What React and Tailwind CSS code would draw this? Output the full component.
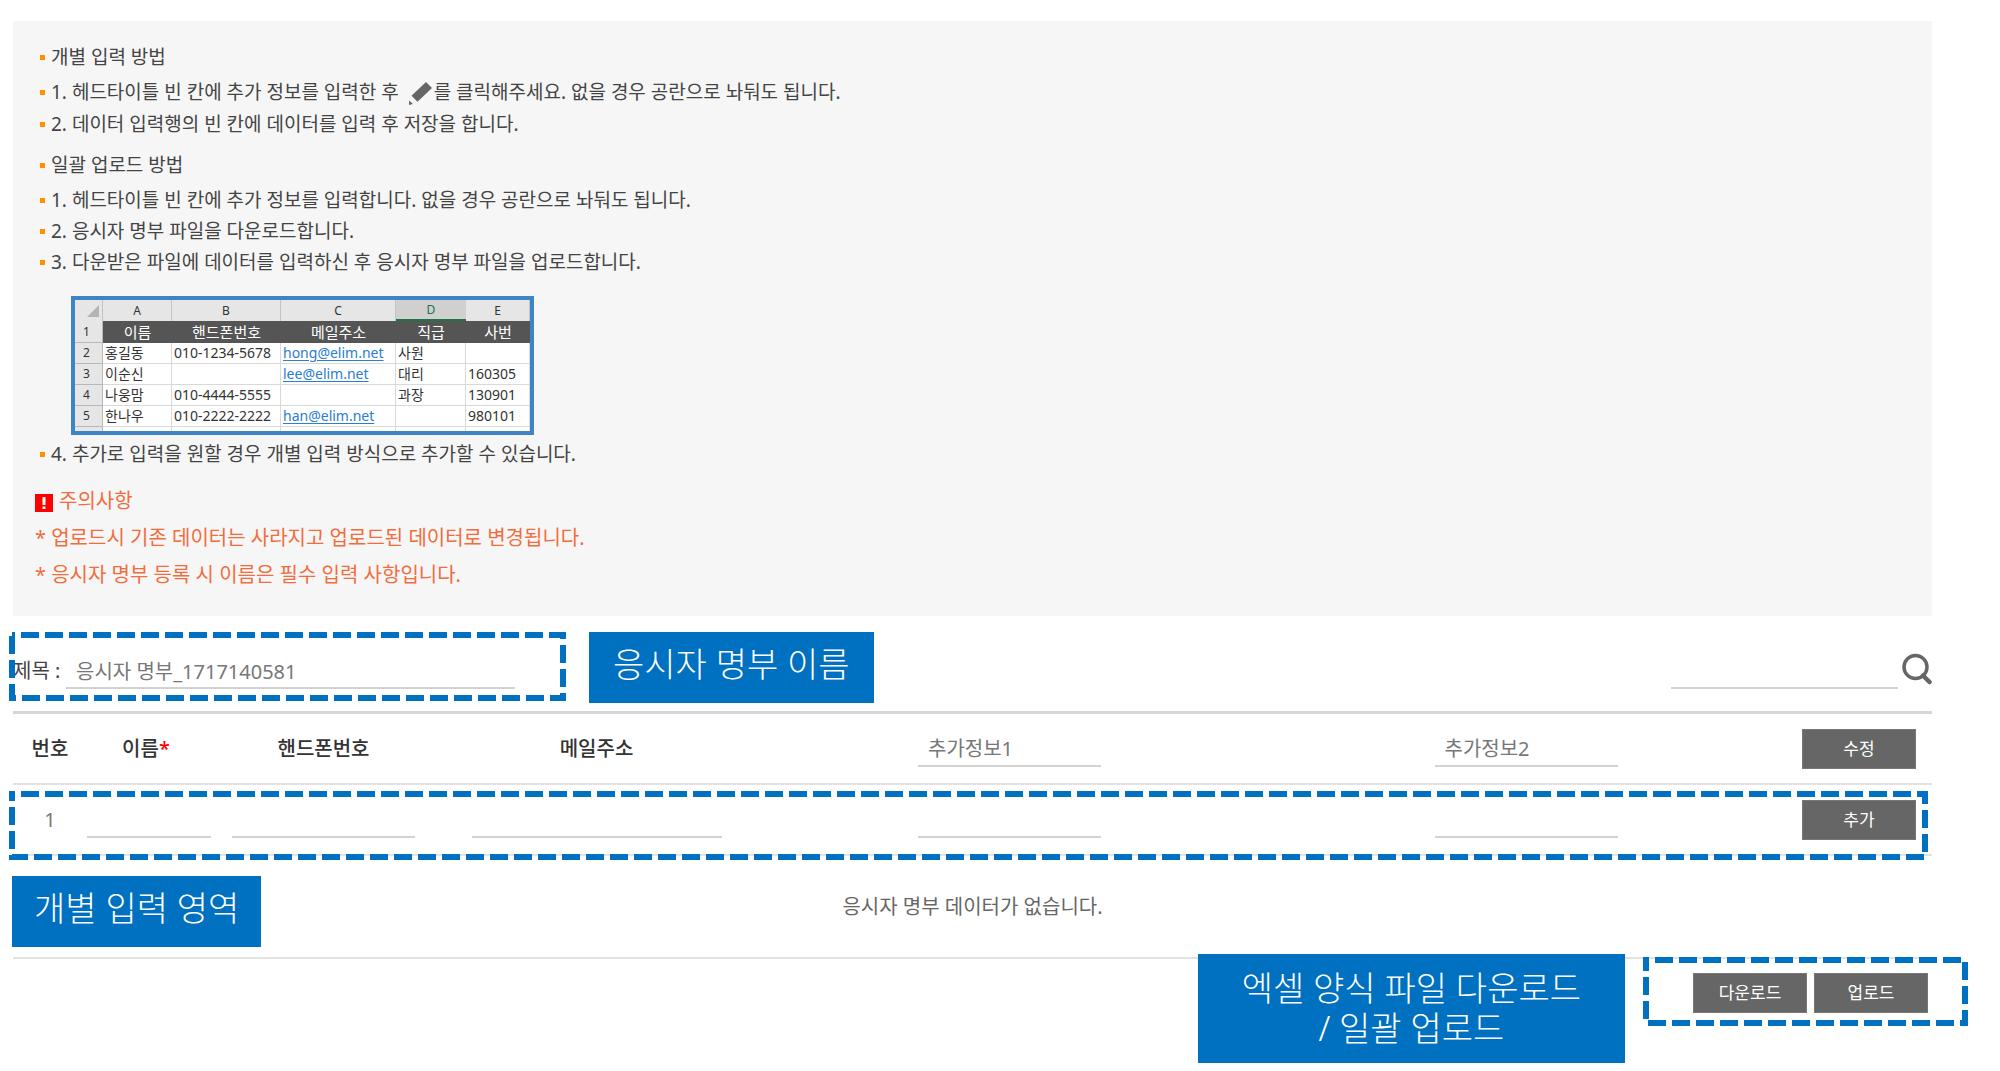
import React from "react";

function DashedFrame({ className }) {
  return (
    <svg className={`pointer-events-none absolute ${className}`} aria-hidden="true">
      <rect
        x="3"
        y="3"
        className="h-[calc(100%-6px)] w-[calc(100%-6px)]"
        fill="none"
        stroke="#0070c0"
        strokeWidth="6"
        strokeDasharray="18 6"
        strokeDashoffset="15"
      />
    </svg>
  );
}

function Callout({ className, children }) {
  return (
    <div className={`absolute bg-[#0070c0] text-center text-[34px] leading-10 font-light whitespace-nowrap text-white ${className}`}>
      {children}
    </div>
  );
}

function Item({ className = "", children }) {
  return (
    <li className={`flex items-center ${className}`}>
      <span className="mr-1.5 size-[5px] shrink-0 bg-[#ff9000]" />
      <span className="flex items-center whitespace-pre">{children}</span>
    </li>
  );
}

function Pencil() {
  return (
    <svg className="mr-0.5 ml-1 h-6 w-6" viewBox="0 0 24 24" fill="#666666" role="img" aria-label="수정">
      <path d="M18 1l6 6L9.500 20.700l-6-6z" />
      <path d="M1 19.500l4 3.500-4 1z" />
    </svg>
  );
}

function SearchIcon() {
  return (
    <svg className="h-8 w-[30px]" viewBox="0 0 30 32" fill="none" stroke="#666666" aria-hidden="true">
      <circle cx="13.500" cy="14" r="11.500" strokeWidth="3.500" />
      <path d="M21 22.500l6.500 6.500" strokeWidth="4.500" strokeLinecap="round" />
    </svg>
  );
}

function Field({ label, className, ...rest }) {
  return (
    <input
      type="text"
      aria-label={label}
      className={`h-9 border-b-2 border-[#d2d2d2] bg-transparent text-[20px] text-[#777777] outline-none ${className}`}
      {...rest}
    />
  );
}

function GrayButton({ children }) {
  return (
    <button type="button" className="h-10 w-[114px] border border-[#777777] bg-[#666666] text-[17px] text-white">
      {children}
    </button>
  );
}

const sheetRows = [
  ["홍길동", "010-1234-5678", "hong@elim.net", "사원", ""],
  ["이순신", "", "lee@elim.net", "대리", "160305"],
  ["나웅맘", "010-4444-5555", "", "과장", "130901"],
  ["한나우", "010-2222-2222", "han@elim.net", "", "980101"],
];

function Sheet() {
  const numCell = "border-r border-b border-[#b8b8b8] bg-[#e6e6e6] p-0 pr-1 text-center text-[12px] font-normal";
  return (
    <div className="mt-[18px] ml-[31px] h-[139px] w-[463px] overflow-hidden border-4 border-[#3d85c6] bg-white">
      <table className="w-full table-fixed border-separate border-spacing-0 text-[14px] leading-5 text-[#333333]">
        <colgroup>
          <col className="w-7" />
          <col className="w-[69px]" />
          <col className="w-[109px]" />
          <col className="w-[115px]" />
          <col className="w-[70px]" />
          <col />
        </colgroup>
        <thead>
          <tr className="h-[21px] text-[12px]">
            <td className="border-r border-[#c4c4c4] bg-[#e6e6e6] p-0">
              <svg className="ml-3 h-3 w-3" viewBox="0 0 12 12" fill="#b4b4b4" aria-hidden="true">
                <path d="M12 0v12H0z" />
              </svg>
            </td>
            {["A", "B", "C", "D", "E"].map((c) => (
              <th
                key={c}
                className={
                  c === "D"
                    ? "border-b-2 border-[#217346] bg-[#d0d0d0] p-0 leading-4 font-normal text-[#217346]"
                    : "border-r border-[#c4c4c4] bg-[#e6e6e6] p-0 leading-4 font-normal"
                }
              >
                {c}
              </th>
            ))}
          </tr>
        </thead>
        <tbody>
          <tr className="h-[22px]">
            <th className={numCell}>1</th>
            {["이름", "핸드폰번호", "메일주소", "직급", "사번"].map((c) => (
              <th key={c} className="bg-[#555555] p-0 text-[15px] font-normal text-white">
                {c}
              </th>
            ))}
          </tr>
          {sheetRows.map((row, i) => (
            <tr key={row[0]} className="h-[21px]">
              <th className={numCell}>{i + 2}</th>
              {row.map((cell, j) => (
                <td key={j} className="border-r border-b border-[#d9d9d9] p-0 pl-0.5 whitespace-nowrap">
                  {j === 2 && cell ? (
                    <a href={`mailto:${cell}`} className="text-[#2b7cd3] underline underline-offset-2">
                      {cell}
                    </a>
                  ) : (
                    cell
                  )}
                </td>
              ))}
            </tr>
          ))}
          <tr className="h-2">
            <th className={numCell}></th>
            {[0, 1, 2, 3, 4].map((n) => (
              <td key={n} className="border-r border-[#d9d9d9] p-0"></td>
            ))}
          </tr>
        </tbody>
      </table>
    </div>
  );
}

export default function App() {
  const cell = "border-b-2 border-[#e2e2e2] text-center";
  return (
    <main className="relative bg-white pt-[21px] pr-[68px] pb-14 pl-[13px] font-['Noto_Sans','Noto_Sans_CJK_KR',sans-serif] text-[#444444]">
      <section className="bg-[#f6f6f6] px-[18px] pt-[21px] pb-[23px]">
        <ul className="ml-[9px] text-[19px] leading-[31px]">
          <Item>개별 입력 방법</Item>
          <Item className="mt-1">
            1. 헤드타이틀 빈 칸에 추가 정보를 입력한 후 <Pencil />를 클릭해주세요. 없을 경우 공란으로 놔둬도 됩니다.
          </Item>
          <Item className="mt-px">2. 데이터 입력행의 빈 칸에 데이터를 입력 후 저장을 합니다.</Item>
          <Item className="mt-2.5">일괄 업로드 방법</Item>
          <Item className="mt-1">1. 헤드타이틀 빈 칸에 추가 정보를 입력합니다. 없을 경우 공란으로 놔둬도 됩니다.</Item>
          <Item>2. 응시자 명부 파일을 다운로드합니다.</Item>
          <Item>3. 다운받은 파일에 데이터를 입력하신 후 응시자 명부 파일을 업로드합니다.</Item>
          <li>
            <Sheet />
          </li>
          <Item className="mt-1">4. 추가로 입력을 원할 경우 개별 입력 방식으로 추가할 수 있습니다.</Item>
        </ul>
        <div className="mt-3 ml-1 text-[20px] leading-[37px] text-[#f26c3c]">
          <h2 className="flex items-center gap-1.5">
            <svg className="mt-1 h-[18px] w-[18px]" viewBox="0 0 18 18" aria-hidden="true">
              <rect width="18" height="18" fill="#ff0000" />
              <path d="M7.500 3h3v8h-3zM7.500 12.500h3v2.500h-3z" fill="#ffffff" />
            </svg>
            주의사항
          </h2>
          <p>* 업로드시 기존 데이터는 사라지고 업로드된 데이터로 변경됩니다.</p>
          <p>* 응시자 명부 등록 시 이름은 필수 입력 사항입니다.</p>
        </div>
      </section>

      <form className="relative mt-[37px] flex items-center justify-between pb-[22px]" onSubmit={(e) => e.preventDefault()}>
        <div className="relative flex w-[502px] items-center">
          <label htmlFor="list-title" className="w-[53px] text-[20px] whitespace-nowrap">
            제목 :
          </label>
          <Field id="list-title" className="w-[449px] px-2.5" defaultValue="응시자 명부_1717140581" />
          <DashedFrame className="-top-[21px] -left-1 h-[69px] w-[557px]" />
        </div>
        <Callout className="-top-[21px] left-[576px] px-6 pt-3 pb-[19px]">응시자 명부 이름</Callout>
        <div className="flex items-center gap-1">
          <Field label="검색" className="w-[227px] px-2" />
          <button type="submit" aria-label="검색" className="-mt-1">
            <SearchIcon />
          </button>
        </div>
      </form>

      <div className="relative">
        <table className="w-full table-fixed border-separate border-spacing-0 border-t-3 border-[#d6d6d6] text-[20px]">
          <colgroup>
            <col className="w-[74px]" />
            <col className="w-[124px]" />
            <col className="w-[225px]" />
            <col className="w-[321px]" />
            <col className="w-[505px]" />
            <col />
            <col className="w-[142px]" />
          </colgroup>
          <thead>
            <tr className="h-[71px] text-[#333333]">
              <th className={`${cell} p-0 font-medium`}>번호</th>
              <th className={`${cell} p-0 pr-1.5 font-medium`}>
                이름<span className="text-[#ff0000]">*</span>
              </th>
              <th className={`${cell} p-0 font-medium`}>핸드폰번호</th>
              <th className={`${cell} p-0 font-medium`}>메일주소</th>
              <th className={`${cell} p-0 font-normal`}>
                <Field label="추가정보1" className="w-[183px] px-2.5" defaultValue="추가정보1" />
              </th>
              <th className={`${cell} p-0 font-normal`}>
                <Field label="추가정보2" className="w-[183px] px-2.5" defaultValue="추가정보2" />
              </th>
              <th className={`${cell} p-0 pr-1 font-normal`}>
                <GrayButton>수정</GrayButton>
              </th>
            </tr>
          </thead>
          <tbody>
            <tr className="h-[71px]">
              <td className={`${cell} p-0 text-[#777777]`}>1</td>
              <td className={`${cell} p-0`}>
                <Field label="이름" className="w-[124px] px-2" />
              </td>
              <td className={`${cell} p-0`}>
                <Field label="핸드폰번호" className="w-[183px] px-2" />
              </td>
              <td className={`${cell} p-0`}>
                <Field label="메일주소" className="w-[250px] px-2" />
              </td>
              <td className={`${cell} p-0`}>
                <Field label="추가정보1 값" className="w-[183px] px-2" />
              </td>
              <td className={`${cell} p-0`}>
                <Field label="추가정보2 값" className="w-[183px] px-2" />
              </td>
              <td className={`${cell} p-0 pr-1`}>
                <GrayButton>추가</GrayButton>
              </td>
            </tr>
            <tr className="h-[103px]">
              <td colSpan={7} className={`${cell} p-0 text-[#666666]`}>
                응시자 명부 데이터가 없습니다.
              </td>
            </tr>
          </tbody>
        </table>
        <DashedFrame className="top-20 -left-1 h-[69px] w-full" />
        <Callout className="top-[165px] -left-px px-[22px] pt-3 pb-[19px]">개별 입력 영역</Callout>
      </div>

      <footer className="relative mt-3.5 flex justify-end gap-[7px] pr-1">
        <GrayButton>다운로드</GrayButton>
        <GrayButton>업로드</GrayButton>
        <DashedFrame className="-top-4 -right-9 h-[69px] w-[325px]" />
        <Callout className="-top-[19px] right-[307px] px-11 pt-3.5 pb-[15px]">
          엑셀 양식 파일 다운로드
          <br />/ 일괄 업로드
        </Callout>
      </footer>
    </main>
  );
}
